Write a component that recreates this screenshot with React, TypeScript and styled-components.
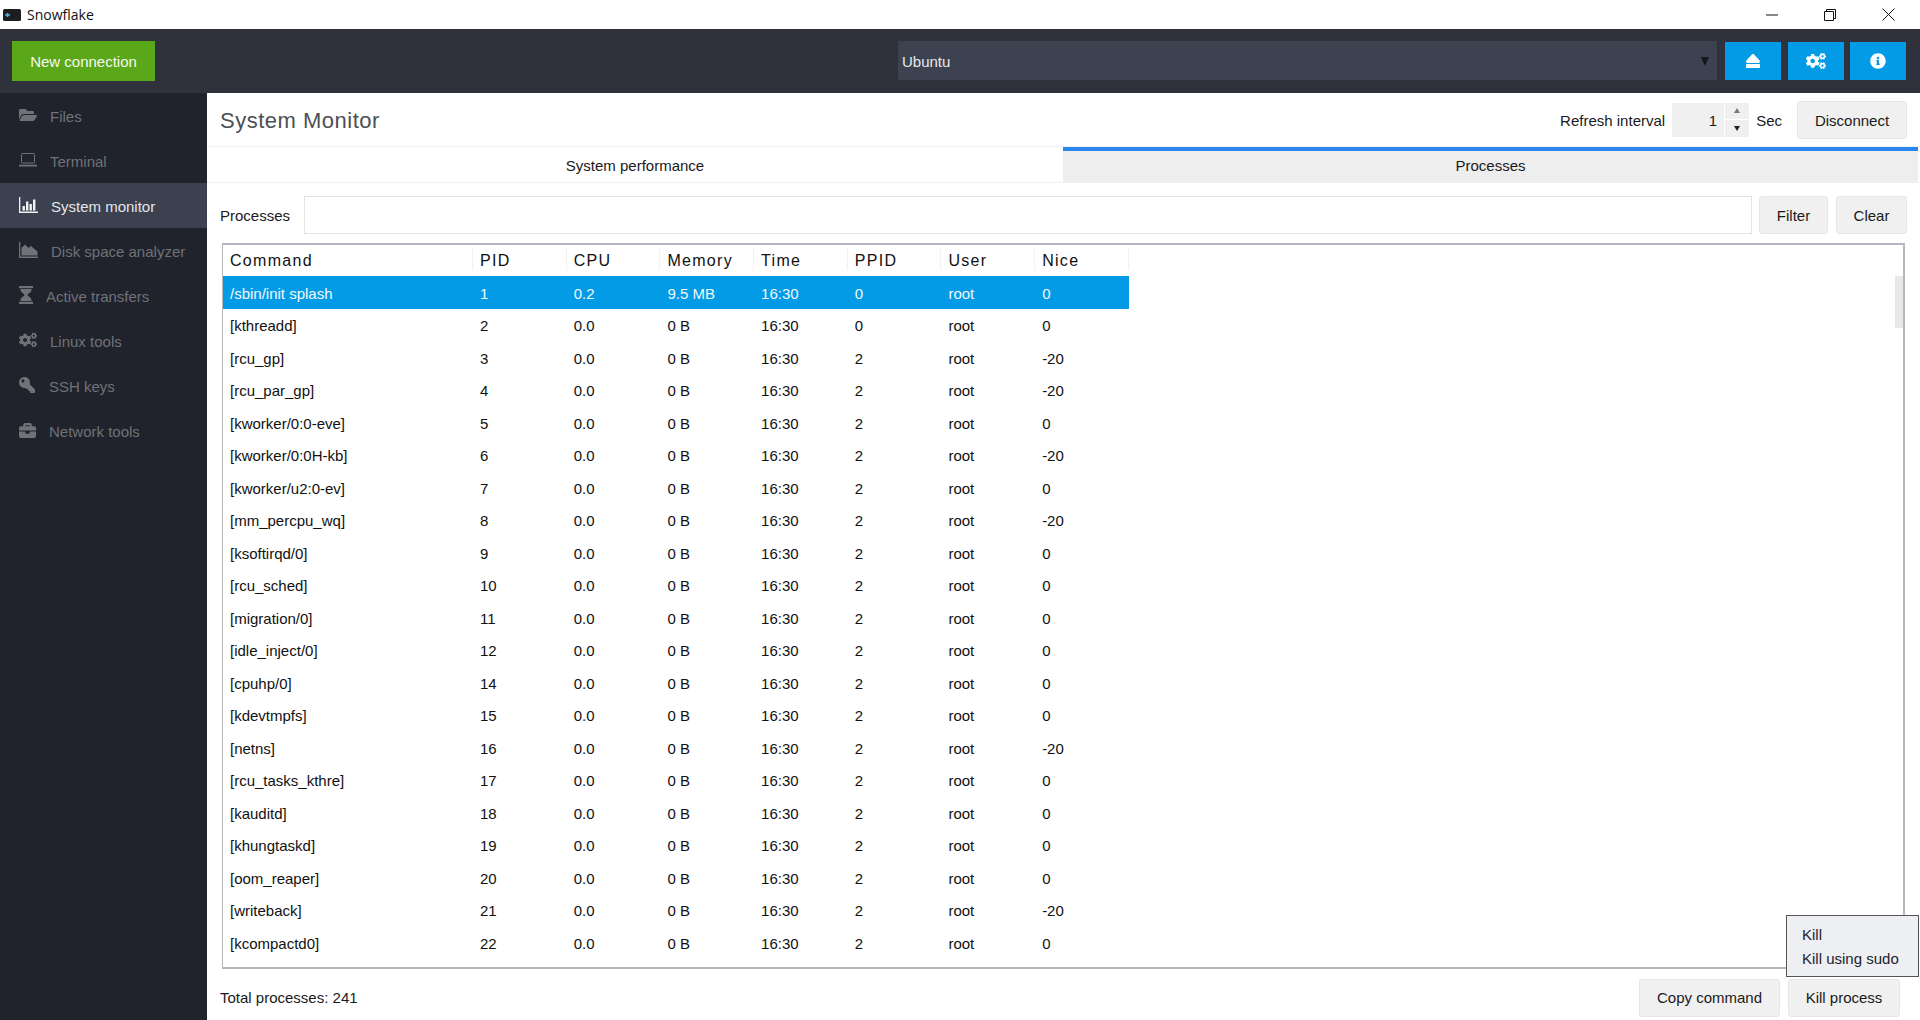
import React from "react";
import styled, { createGlobalStyle } from "styled-components";
import {
  FaBriefcase,
  FaCogs,
  FaEject,
  FaFolderOpen,
  FaInfoCircle,
  FaKey,
} from "react-icons/fa";

const GlobalStyle = createGlobalStyle`
  html, body {
    margin: 0;
    padding: 0;
    height: 100%;
    overflow: hidden;
    background: #fff;
  }
  body {
    font-family: "Liberation Sans", Arial, sans-serif;
    font-size: 15px;
    color: #1a1a1a;
  }
  * { box-sizing: border-box; }
`;

const Window = styled.div`
  width: 1920px;
  height: 1020px;
  display: flex;
  flex-direction: column;
`;

const TitleBar = styled.div`
  height: 29px;
  display: flex;
  align-items: center;
  padding-left: 3px;
  background: #fff;
`;

const AppTitle = styled.span`
  margin-left: 6px;
  font-family: "Open Sans", sans-serif;
  font-size: 14px;
  color: #111;
`;

const WindowControls = styled.div`
  margin-left: auto;
  display: flex;
  align-items: center;
  padding-right: 3px;
`;

const WindowControl = styled.div`
  width: 58px;
  height: 29px;
  display: flex;
  align-items: center;
  justify-content: center;
`;

const Toolbar = styled.div`
  height: 64px;
  background: #2f323d;
  display: flex;
  align-items: center;
  padding: 0 14px 0 12px;
`;

const NewConnection = styled.button`
  width: 143px;
  height: 40px;
  border: 0;
  background: #5aa71a;
  color: #f4f9ee;
  font-family: inherit;
  font-size: 15px;
  padding: 0;
`;

const SessionSelect = styled.div`
  margin-left: auto;
  margin-bottom: 1px;
  width: 819px;
  height: 39px;
  background: #3c4250;
  color: #e8e9ec;
  display: flex;
  align-items: center;
  justify-content: space-between;
  padding: 1px 8px 0 4px;
`;

const SelectArrow = styled.span`
  width: 0;
  height: 0;
  border-left: 4px solid transparent;
  border-right: 4px solid transparent;
  border-top: 9px solid #14161a;
`;

const ToolButtons = styled.div`
  display: flex;
  margin-left: 8px;
  gap: 6.5px;
`;

const ToolButton = styled.div`
  width: 56px;
  height: 38px;
  background: #039be5;
  color: #fff;
  display: flex;
  align-items: center;
  justify-content: center;
  font-size: 16px;
`;

const Body = styled.div`
  flex: 1;
  display: flex;
  min-height: 0;
`;

const Sidebar = styled.nav`
  width: 207px;
  background: #20232c;
  display: flex;
  flex-direction: column;
  flex-shrink: 0;
`;

const NavItem = styled.div<{ $active?: boolean; $gap: number }>`
  height: 45px;
  display: flex;
  align-items: center;
  padding: 2px 0 0 19px;
  gap: ${({ $gap }) => $gap}px;
  background: ${({ $active }) => ($active ? "#3c4150" : "transparent")};
  color: ${({ $active }) => ($active ? "#e2e4e8" : "#6f7277")};

  svg {
    flex-shrink: 0;
    font-size: 18px;
    margin-top: -3px;
    color: ${({ $active }) => ($active ? "#f0f1f3" : "#6f7277")};
  }
`;

const KeyIcon = styled(FaKey)`
  transform: scaleX(-1);
`;

const Main = styled.main`
  flex: 1;
  min-width: 0;
  display: flex;
  flex-direction: column;
`;

const Header = styled.div`
  height: 54px;
  display: flex;
  align-items: center;
  padding: 0 13px;
  border-bottom: 1px solid #f0f0f0;
`;

const PageTitle = styled.h1`
  margin: 0;
  padding-top: 3px;
  font-size: 22px;
  font-weight: 400;
  letter-spacing: 0.5px;
  color: #4d5054;
`;

const RefreshGroup = styled.div`
  margin-left: auto;
  padding-top: 1px;
  display: flex;
  align-items: center;
`;

const RefreshLabel = styled.span`
  padding-top: 1px;
`;

const Spinner = styled.div`
  display: flex;
  margin: -1px 0 0 7px;
  height: 34px;
`;

const SpinnerValue = styled.div`
  width: 52px;
  background: #f0f0f0;
  display: flex;
  align-items: center;
  justify-content: flex-end;
  padding: 2px 7px 0 0;
`;

const SpinnerArrows = styled.div`
  width: 24px;
  margin-left: 1px;
  display: flex;
  flex-direction: column;
  gap: 1px;
`;

const SpinnerArrow = styled.div<{ $up?: boolean }>`
  flex: 1;
  background: #f0f0f0;
  display: flex;
  align-items: center;
  justify-content: center;

  &::after {
    content: "";
    border-left: 3.5px solid transparent;
    border-right: 3.5px solid transparent;
    ${({ $up }) =>
      $up ? "border-bottom: 5px solid #777;" : "border-top: 5px solid #222;"}
  }
`;

const SecLabel = styled.span`
  margin: 0 15px 0 7px;
  padding-top: 1px;
`;

const Button = styled.button<{ $width: number }>`
  width: ${({ $width }) => $width}px;
  height: 38px;
  border: 1px solid #e6e6e6;
  border-radius: 3px;
  background: #f0f0f0;
  color: #1a1a1a;
  font-family: inherit;
  font-size: 15px;
  padding: 0;
`;

const Tabs = styled.div`
  height: 36px;
  display: flex;
  border-bottom: 1px solid #f0f0f0;
  padding-right: 2px;
`;

const Tab = styled.div<{ $active?: boolean }>`
  flex: ${({ $active }) => ($active ? "855" : "856")};
  display: flex;
  align-items: center;
  justify-content: center;
  padding-bottom: 2px;
  border-top: 4px solid ${({ $active }) => ($active ? "#2a85ef" : "transparent")};
  background: ${({ $active }) => ($active ? "#eeeeee" : "#fff")};
`;

const FilterRow = styled.div`
  margin-top: 13px;
  display: flex;
  align-items: center;
  padding: 0 13px;
  height: 38px;
`;

const FilterInput = styled.div`
  width: 1448px;
  height: 38px;
  margin: 0 7px 0 auto;
  border: 1px solid #e4e4e4;
`;

const ClearGap = styled.div`
  width: 8px;
`;

const TableFrame = styled.div`
  position: relative;
  margin: 9px 15px 0 15px;
  height: 726px;
  border: 2px solid #b4b7bd;
  border-left-width: 1px;
  overflow: hidden;
`;

const HeaderRow = styled.div`
  display: grid;
  grid-template-columns: 250px repeat(7, 93.7px);
  width: 906px;
  height: 31px;
  padding-bottom: 4px;
  align-items: center;
`;

const HeaderCell = styled.div`
  height: 22px;
  display: flex;
  align-items: center;
  padding: 4px 0 0 7px;
  font-size: 16px;
  letter-spacing: 1.3px;
  color: #111;
  border-right: 1px solid #f2f2f2;
`;

const Row = styled.div<{ $selected?: boolean }>`
  display: grid;
  grid-template-columns: 250px repeat(7, 93.7px);
  width: 906px;
  height: 32.5px;
  padding-top: 2px;
  align-items: center;
  background: ${({ $selected }) => ($selected ? "#039be5" : "transparent")};
  color: ${({ $selected }) => ($selected ? "#f2f9fd" : "#111")};
`;

const Cell = styled.div`
  padding-left: 7px;
  white-space: nowrap;
`;

const ScrollThumb = styled.div`
  position: absolute;
  top: 31px;
  right: 0;
  width: 8px;
  height: 52px;
  background: #e8e8e8;
`;

const Footer = styled.div`
  flex: 1;
  display: flex;
  align-items: center;
  padding: 6px 20px 0 13px;
  position: relative;
`;

const FooterActions = styled.div`
  margin-left: auto;
  display: flex;
  gap: 8px;
`;

const KillMenu = styled.div`
  position: absolute;
  right: 1px;
  bottom: 43px;
  width: 133px;
  height: 62px;
  background: #eeeff3;
  border: 1px solid #555;
  padding: 7px 15px;
  display: flex;
  flex-direction: column;
  line-height: 24px;
  color: #20232c;
`;

const columns = ["Command", "PID", "CPU", "Memory", "Time", "PPID", "User", "Nice"];

const rows: [string, number, string, string, number, string][] = [
  ["[kthreadd]", 2, "0.0", "0 B", 0, "0"],
  ["[rcu_gp]", 3, "0.0", "0 B", 2, "-20"],
  ["[rcu_par_gp]", 4, "0.0", "0 B", 2, "-20"],
  ["[kworker/0:0-eve]", 5, "0.0", "0 B", 2, "0"],
  ["[kworker/0:0H-kb]", 6, "0.0", "0 B", 2, "-20"],
  ["[kworker/u2:0-ev]", 7, "0.0", "0 B", 2, "0"],
  ["[mm_percpu_wq]", 8, "0.0", "0 B", 2, "-20"],
  ["[ksoftirqd/0]", 9, "0.0", "0 B", 2, "0"],
  ["[rcu_sched]", 10, "0.0", "0 B", 2, "0"],
  ["[migration/0]", 11, "0.0", "0 B", 2, "0"],
  ["[idle_inject/0]", 12, "0.0", "0 B", 2, "0"],
  ["[cpuhp/0]", 14, "0.0", "0 B", 2, "0"],
  ["[kdevtmpfs]", 15, "0.0", "0 B", 2, "0"],
  ["[netns]", 16, "0.0", "0 B", 2, "-20"],
  ["[rcu_tasks_kthre]", 17, "0.0", "0 B", 2, "0"],
  ["[kauditd]", 18, "0.0", "0 B", 2, "0"],
  ["[khungtaskd]", 19, "0.0", "0 B", 2, "0"],
  ["[oom_reaper]", 20, "0.0", "0 B", 2, "0"],
  ["[writeback]", 21, "0.0", "0 B", 2, "-20"],
  ["[kcompactd0]", 22, "0.0", "0 B", 2, "0"],
];

const AppIcon = () => (
  <svg width="18" height="12" viewBox="0 0 18 12">
    <rect x="0" y="0" width="18" height="12" rx="1.5" fill="#1c1e22" />
    <path d="M2 6h5M4.5 4v4" stroke="#4fb3e8" strokeWidth="1.6" />
  </svg>
);

const LaptopIcon = () => (
  <svg width="18" height="14" viewBox="0 0 18 14" fill="none" stroke="currentColor">
    <rect x="2.5" y="0.5" width="13" height="9.5" rx="0.8" strokeWidth="1" />
    <path d="M0 12.6h18" strokeWidth="1.8" />
  </svg>
);

const BarChartIcon = () => (
  <svg width="19" height="16" viewBox="0 0 19 16" fill="currentColor">
    <path d="M0 0h1.3v14.6H19V16H0z" />
    <rect x="3.5" y="9" width="2.4" height="4.6" />
    <rect x="7" y="4.5" width="2.4" height="9.1" />
    <rect x="10.5" y="7" width="2.4" height="6.6" />
    <rect x="14" y="2.5" width="2.4" height="11.1" />
  </svg>
);

const AreaChartIcon = () => (
  <svg width="19" height="16" viewBox="0 0 19 16" fill="currentColor">
    <path d="M0 0h1.3v14.6H19V16H0z" />
    <path d="M2.5 13.6V6L6 2.5l3.5 3.6 2.5-2 6.5 5.4v4.1z" />
  </svg>
);

const HourglassIcon = () => (
  <svg width="14" height="18" viewBox="0 0 14 18" fill="currentColor">
    <rect x="0" y="0" width="14" height="2.2" />
    <rect x="0" y="15.8" width="14" height="2.2" />
    <path d="M1.5 3h11v.8C12.500 6.800 8.600 7.700 8.600 9s3.900 2.200 3.900 5.200v.8h-11v-.8C1.500 11.200 5.400 10.300 5.400 9S1.500 6.800 1.500 3.800z" />
  </svg>
);

const MinimizeIcon = () => (
  <svg width="12" height="2" viewBox="0 0 12 2">
    <path d="M0 1h12" stroke="#111" strokeWidth="1" />
  </svg>
);

const RestoreIcon = () => (
  <svg width="12" height="12" viewBox="0 0 12 12" fill="none" stroke="#111">
    <path d="M.5 2.5h9v9h-9zM2.500 2.500v-2h9v9h-2" />
  </svg>
);

const CloseIcon = () => (
  <svg width="13" height="13" viewBox="0 0 13 13" fill="none" stroke="#111">
    <path d="M.5.5l12 12M12.500.5l-12 12" />
  </svg>
);

const App: React.FC = () => (
  <Window>
    <GlobalStyle />
    <TitleBar>
      <AppIcon />
      <AppTitle>Snowflake</AppTitle>
      <WindowControls>
        <WindowControl>
          <MinimizeIcon />
        </WindowControl>
        <WindowControl>
          <RestoreIcon />
        </WindowControl>
        <WindowControl>
          <CloseIcon />
        </WindowControl>
      </WindowControls>
    </TitleBar>
    <Toolbar>
      <NewConnection>New connection</NewConnection>
      <SessionSelect>
        Ubuntu
        <SelectArrow />
      </SessionSelect>
      <ToolButtons>
        <ToolButton>
          <FaEject />
        </ToolButton>
        <ToolButton>
          <FaCogs size={20} />
        </ToolButton>
        <ToolButton>
          <FaInfoCircle />
        </ToolButton>
      </ToolButtons>
    </Toolbar>
    <Body>
      <Sidebar>
        <NavItem $gap={13}>
          <FaFolderOpen />
          Files
        </NavItem>
        <NavItem $gap={13}>
          <LaptopIcon />
          Terminal
        </NavItem>
        <NavItem $active $gap={13}>
          <BarChartIcon />
          System monitor
        </NavItem>
        <NavItem $gap={13}>
          <AreaChartIcon />
          Disk space analyzer
        </NavItem>
        <NavItem $gap={13}>
          <HourglassIcon />
          Active transfers
        </NavItem>
        <NavItem $gap={13}>
          <FaCogs />
          Linux tools
        </NavItem>
        <NavItem $gap={14}>
          <KeyIcon size={16} />
          SSH keys
        </NavItem>
        <NavItem $gap={13}>
          <FaBriefcase size={17} />
          Network tools
        </NavItem>
      </Sidebar>
      <Main>
        <Header>
          <PageTitle>System Monitor</PageTitle>
          <RefreshGroup>
            <RefreshLabel>Refresh interval</RefreshLabel>
            <Spinner>
              <SpinnerValue>1</SpinnerValue>
              <SpinnerArrows>
                <SpinnerArrow $up />
                <SpinnerArrow />
              </SpinnerArrows>
            </Spinner>
            <SecLabel>Sec</SecLabel>
            <Button $width={110}>Disconnect</Button>
          </RefreshGroup>
        </Header>
        <Tabs>
          <Tab>System performance</Tab>
          <Tab $active>Processes</Tab>
        </Tabs>
        <FilterRow>
          Processes
          <FilterInput />
          <Button $width={69}>Filter</Button>
          <ClearGap />
          <Button $width={71}>Clear</Button>
        </FilterRow>
        <TableFrame>
          <HeaderRow>
            {columns.map((c) => (
              <HeaderCell key={c}>{c}</HeaderCell>
            ))}
          </HeaderRow>
          <Row $selected>
            <Cell>/sbin/init splash</Cell>
            <Cell>1</Cell>
            <Cell>0.2</Cell>
            <Cell>9.5 MB</Cell>
            <Cell>16:30</Cell>
            <Cell>0</Cell>
            <Cell>root</Cell>
            <Cell>0</Cell>
          </Row>
          {rows.map(([cmd, pid, cpu, mem, ppid, nice]) => (
            <Row key={pid}>
              <Cell>{cmd}</Cell>
              <Cell>{pid}</Cell>
              <Cell>{cpu}</Cell>
              <Cell>{mem}</Cell>
              <Cell>16:30</Cell>
              <Cell>{ppid}</Cell>
              <Cell>root</Cell>
              <Cell>{nice}</Cell>
            </Row>
          ))}
          <ScrollThumb />
        </TableFrame>
        <Footer>
          Total processes: 241
          <FooterActions>
            <Button $width={141}>Copy command</Button>
            <Button $width={112}>Kill process</Button>
          </FooterActions>
          <KillMenu>
            <span>Kill</span>
            <span>Kill using sudo</span>
          </KillMenu>
        </Footer>
      </Main>
    </Body>
  </Window>
);

export default App;
